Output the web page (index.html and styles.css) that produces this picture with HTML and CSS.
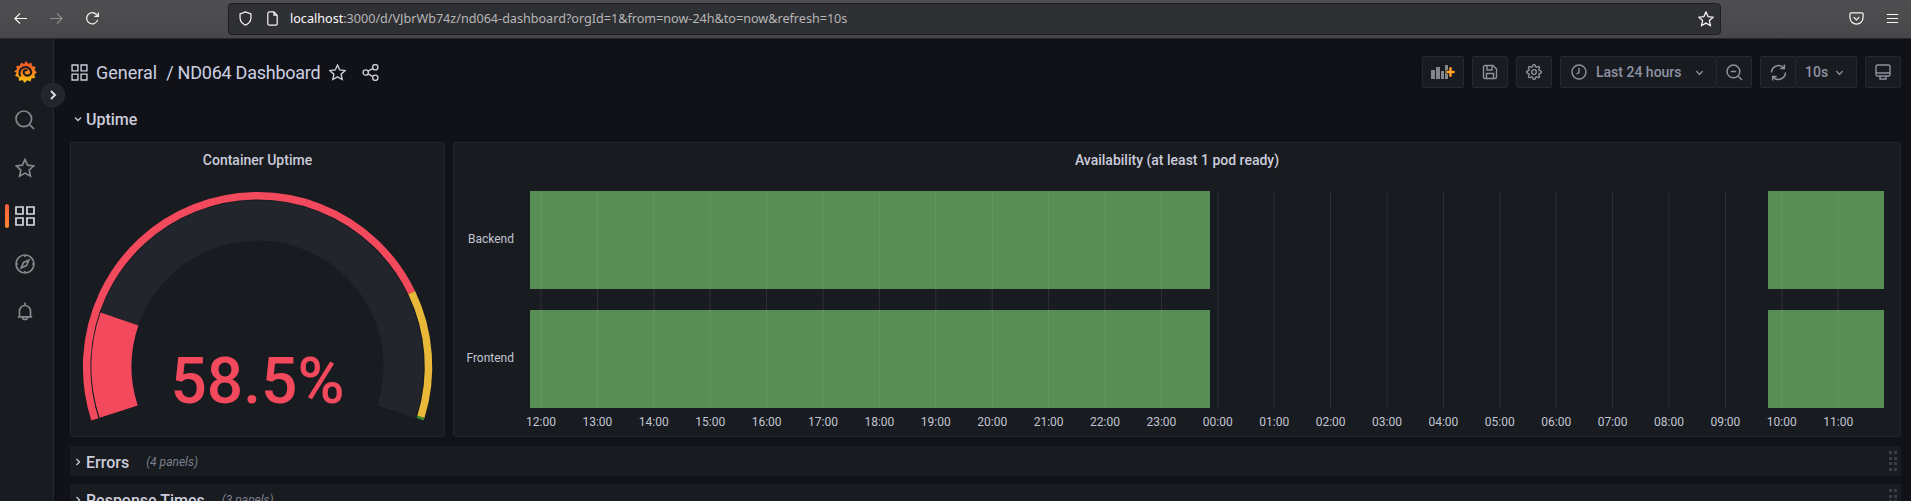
FILE: index.html
```html
<!DOCTYPE html>
<html lang="en">
<head>
<meta charset="utf-8">
<title>ND064 Dashboard - Grafana</title>
<link rel="stylesheet" href="styles.css">
</head>
<body>
<header class="browser">
  <div class="nav-group">
    <svg class="bicon" viewBox="0 0 16 16"><path d="M15 8H2M7.500 2.500 2 8l5.500 5.500"/></svg>
    <svg class="bicon dim" viewBox="0 0 16 16"><path d="M1 8h13M8.500 2.500 14 8l-5.500 5.500"/></svg>
    <svg class="bicon" viewBox="0 0 16 16"><path d="M13.500 9.500A6 6 0 1 1 12.200 3.700L14 5.500M14.300 1.500v4.300H10"/></svg>
  </div>
  <div class="urlbar">
    <svg class="bicon shield" viewBox="0 0 16 16"><path d="M8 1 2.200 3v4.500C2.200 11.500 5.500 14.300 8 15c2.500-.7 5.800-3.500 5.800-7.500V3z"/></svg>
    <svg class="bicon page" viewBox="0 0 16 16"><path d="M3 2.500A1.500 1.500 0 0 1 4.500 1H9.500L13 4.500V13.500A1.500 1.500 0 0 1 11.500 15H4.500A1.500 1.500 0 0 1 3 13.500zM9.500 1V4.500H13"/></svg>
    <span class="url"><span class="host">localhost</span>:3000/d/VJbrWb74z/nd064-dashboard?orgId=1&amp;from=now-24h&amp;to=now&amp;refresh=10s</span>
    <svg class="bicon ustar" viewBox="0 0 16 16"><path d="m8 1 2.100 4.600 5 .6-3.700 3.400 1 5L8 12.100 3.600 14.600l1-5L.9 6.200l5-.6z"/></svg>
  </div>
  <div class="browser-right">
    <svg class="bicon" viewBox="0 0 16 16"><path d="M2.200 2h11.600A1.200 1.200 0 0 1 15 3.200V7A7 7 0 0 1 1 7V3.200A1.200 1.200 0 0 1 2.200 2zM5 6.500 8 9.500l3-3"/></svg>
    <svg class="bicon menu" viewBox="0 0 16 16"><path d="M1 3h14M1 8h14M1 13h14"/></svg>
  </div>
</header>

<div class="app">
  <nav class="sidebar">
    <div class="nav-item">
      <svg class="logo" viewBox="0 0 24 24">
        <defs><linearGradient id="lg" x1="0" y1="0" x2="0" y2="1"><stop offset="0" stop-color="#ee4b2b"/><stop offset=".55" stop-color="#f58a1f"/><stop offset="1" stop-color="#fbca0a"/></linearGradient></defs>
        <path fill="url(#lg)" d="M12.500 .2l2.200 3.300 3.600-1.200.5 3.800 3.800.5-1.100 3.400 2.300 2.400-2.600 2.100.9 3.700-3.700.3-1.300 3.500-3.300-1.500-2.700 2.700-2.400-2.900-3.500 1-.4-3.700-3.600-1.400 1.400-3.300L.1 11.500l3-2.100-.7-3.700 3.600-.2L7.400 2.100l3.100 1.500z"/>
        <path class="logo-spiral" d="M6.800 16.500A6.200 6.200 0 1 1 18 11.800 4 4 0 0 1 10 11.800 2 2 0 0 1 13.600 10.800"/>
      </svg>
    </div>
    <div class="nav-item"><svg class="sicon" viewBox="0 0 20 20"><circle cx="8.800" cy="8.800" r="7.800"/><path d="m14.500 14.500 4.500 4.500"/></svg></div>
    <div class="nav-item"><svg class="sicon" viewBox="0 0 20 20"><path d="m10 1.500 2.600 5.600 6.100.8-4.500 4.200 1.200 6L10 15.100l-5.400 3 1.200-6L1.300 7.900l6.100-.8z"/></svg></div>
    <div class="nav-item active"><svg class="sicon" viewBox="0 0 20 20"><path d="M1 1h7v7H1zM12 1h7v7h-7zM1 12h7v7H1zM12 12h7v7h-7z"/></svg></div>
    <div class="nav-item"><svg class="sicon" viewBox="0 0 20 20"><circle cx="10" cy="10" r="9"/><path d="M13.800 6.200 11.500 11.500 6.200 13.800 8.500 8.500z"/><path d="M10 1v2M10 17v2M1 10h2M17 10h2"/></svg></div>
    <div class="nav-item"><svg class="sicon" viewBox="0 0 20 20"><path d="M10 .5v2.500M4.500 14V9a5.500 5.500 0 0 1 11 0v5M2.800 14.800h14.400M7.500 15a2.500 2.500 0 0 0 5 0"/></svg></div>
    <button class="expand" type="button"><svg viewBox="0 0 12 12"><path d="M4 2l4 4-4 4"/></svg></button>
  </nav>

  <main class="main">
    <div class="topbar">
      <div class="title">
        <svg class="ticon grid-icon" viewBox="0 0 16 16"><path d="M1 1h5.500v5.500H1zM9.500 1H15v5.500H9.500zM1 9.500h5.500V15H1zM9.500 9.500H15V15H9.500z"/></svg>
        <span class="crumb">General</span>
        <span class="crumb crumb-page">/ ND064 Dashboard</span>
        <svg class="ticon star-icon" viewBox="0 0 16 16"><path d="m8 1 2.100 4.600 5 .6-3.700 3.400 1 5L8 12.100 3.600 14.600l1-5L.9 6.200l5-.6z"/></svg>
        <svg class="ticon share-icon" viewBox="0 0 16 16"><circle cx="3.500" cy="8" r="2.500"/><circle cx="12.500" cy="3" r="2.500"/><circle cx="12.500" cy="13" r="2.500"/><path d="m5.700 6.800 4.600-2.600M5.700 9.200l4.600 2.600"/></svg>
      </div>
      <div class="tools">
        <div class="tbtn w-add">
          <svg class="add-icon" viewBox="0 0 24 14"><path class="bars" d="M0 5h4v9H0zM5 2h4v12H5zM10 6h3v8h-3zM14 0h3v14h-3z"/><path class="plus" d="M18 2v3.500h-3v3h3V12h3V8.500h3v-3h-3V2z"/></svg>
        </div>
        <div class="tbtn w-ico"><svg class="tbi" viewBox="0 0 16 16"><path d="M1.500 3A1.500 1.500 0 0 1 3 1.500h8l3.500 3.500v8a1.500 1.500 0 0 1-1.500 1.500H3A1.500 1.500 0 0 1 1.500 13zM5 1.500V6h5V1.500M4.500 14.500V9.500h7v5"/></svg></div>
        <div class="tbtn w-ico"><svg class="tbi gear" viewBox="0 0 24 24"><circle cx="12" cy="12" r="3.500"/><path d="M19.400 15a1.650 1.650 0 0 0 .33 1.820l.06.06a2 2 0 0 1 0 2.830 2 2 0 0 1-2.830 0l-.06-.06a1.650 1.650 0 0 0-1.820-.33 1.650 1.650 0 0 0-1 1.510V21a2 2 0 0 1-2 2 2 2 0 0 1-2-2v-.09A1.650 1.650 0 0 0 9 19.400a1.650 1.650 0 0 0-1.820.33l-.06.06a2 2 0 0 1-2.830 0 2 2 0 0 1 0-2.830l.06-.06a1.650 1.650 0 0 0 .33-1.820 1.650 1.650 0 0 0-1.510-1H3a2 2 0 0 1-2-2 2 2 0 0 1 2-2h.09A1.650 1.650 0 0 0 4.600 9a1.650 1.650 0 0 0-.33-1.820l-.06-.06a2 2 0 0 1 0-2.830 2 2 0 0 1 2.830 0l.06.06a1.650 1.650 0 0 0 1.820.33H9a1.650 1.650 0 0 0 1-1.510V3a2 2 0 0 1 2-2 2 2 0 0 1 2 2v.09a1.650 1.650 0 0 0 1 1.510 1.650 1.650 0 0 0 1.820-.33l.06-.06a2 2 0 0 1 2.830 0 2 2 0 0 1 0 2.830l-.06.06a1.650 1.650 0 0 0-.33 1.820V9a1.650 1.650 0 0 0 1.510 1H21a2 2 0 0 1 2 2 2 2 0 0 1-2 2h-.09a1.650 1.650 0 0 0-1.510 1z"/></svg></div>
        <div class="tgroup">
          <div class="tbtn seg time">
            <svg class="tbi" viewBox="0 0 16 16"><circle cx="8" cy="8" r="7"/><path d="M8 4v4.500L5.500 10"/></svg>
            <span class="tlabel">Last 24 hours</span>
            <svg class="chev" viewBox="0 0 10 10"><path d="M1.500 3.500 5 7l3.500-3.500"/></svg>
          </div>
          <div class="tbtn seg w-ico2"><svg class="tbi big" viewBox="0 0 16 16"><circle cx="7" cy="7" r="6"/><path d="M4.500 7h5M11.500 11.500 15 15"/></svg></div>
        </div>
        <div class="tgroup">
          <div class="tbtn seg w-ico2"><svg class="tbi big" viewBox="0 0 16 16"><path d="M1.500 8a6.500 6.500 0 0 1 11.500-4.200M14.500 8A6.500 6.500 0 0 1 3 12.200M13.500 .5v3.800H9.700M2.500 15.500v-3.800h3.800"/></svg></div>
          <div class="tbtn seg refresh">
            <span class="tlabel">10s</span>
            <svg class="chev" viewBox="0 0 10 10"><path d="M1.500 3.500 5 7l3.500-3.500"/></svg>
          </div>
        </div>
        <div class="tbtn w-ico"><svg class="tbi" viewBox="0 0 16 16"><path d="M2.500 1h11A1.500 1.500 0 0 1 15 2.500v8a1.500 1.500 0 0 1-1.500 1.500h-11A1.500 1.500 0 0 1 1 10.500v-8A1.500 1.500 0 0 1 2.500 1zM1 9h14M5 12v3h6v-3"/></svg></div>
      </div>
    </div>

    <div class="row-open">
      <svg class="rchev" viewBox="0 0 10 10"><path d="M2 3.500 5 6.500l3-3"/></svg>
      <span class="row-name">Uptime</span>
    </div>

    <div class="panels">
      <section class="panel gauge-panel">
        <h2 class="panel-title">Container Uptime</h2>
        <svg class="gauge" viewBox="70 142 375 295">
          <path class="g-track" d="M118.650 411.600 A146 146 0 1 1 396.350 411.600"/>
          <path class="g-val" d="M118.650 411.600 A146 146 0 0 1 119.500 319"/>
          <path class="g-red" d="M94.900 419.300 A171 171 0 0 1 411.700 292.600"/>
          <path class="g-yellow" d="M411.700 292.600 A171 171 0 0 1 420.900 417"/>
          <path class="g-green" d="M420.900 417 A171 171 0 0 1 420.100 419.300"/>
          <text class="g-text" x="257.500" y="403" text-anchor="middle">58.5%</text>
        </svg>
      </section>
      <section class="panel chart-panel">
        <h2 class="panel-title">Availability (at least 1 pod ready)</h2>
        <svg class="chart" viewBox="0 0 1448 295">
          <g class="bars-g">
            <rect x="77" y="49" width="680" height="98"/>
            <rect x="77" y="168" width="680" height="98"/>
            <rect x="1315" y="49" width="116" height="98"/>
            <rect x="1315" y="168" width="116" height="98"/>
          </g>
          <g class="grid-g">
            <path d="M88 49V266M144.400 49V266M200.800 49V266M257.200 49V266M313.600 49V266M370 49V266M426.400 49V266M482.800 49V266M539.200 49V266M595.600 49V266M652 49V266M708.400 49V266M764.800 49V266M821.200 49V266M877.600 49V266M934 49V266M990.400 49V266M1046.800 49V266M1103.200 49V266M1159.600 49V266M1216 49V266M1272.400 49V266M1328.800 49V266M1385.200 49V266"/>
          </g>
          <g class="ylabels">
            <text x="61" y="101" text-anchor="end">Backend</text>
            <text x="61" y="220" text-anchor="end">Frontend</text>
          </g>
          <g class="xlabels" text-anchor="middle">
            <text x="88" y="284">12:00</text><text x="144.400" y="284">13:00</text><text x="200.800" y="284">14:00</text><text x="257.200" y="284">15:00</text><text x="313.600" y="284">16:00</text><text x="370" y="284">17:00</text><text x="426.400" y="284">18:00</text><text x="482.800" y="284">19:00</text><text x="539.200" y="284">20:00</text><text x="595.600" y="284">21:00</text><text x="652" y="284">22:00</text><text x="708.400" y="284">23:00</text><text x="764.800" y="284">00:00</text><text x="821.200" y="284">01:00</text><text x="877.600" y="284">02:00</text><text x="934" y="284">03:00</text><text x="990.400" y="284">04:00</text><text x="1046.800" y="284">05:00</text><text x="1103.200" y="284">06:00</text><text x="1159.600" y="284">07:00</text><text x="1216" y="284">08:00</text><text x="1272.400" y="284">09:00</text><text x="1328.800" y="284">10:00</text><text x="1385.200" y="284">11:00</text>
          </g>
        </svg>
      </section>
    </div>

    <div class="row-closed">
      <svg class="rchev" viewBox="0 0 10 10"><path d="M3.500 2 6.500 5l-3 3"/></svg>
      <span class="row-name">Errors</span>
      <span class="row-count">(4 panels)</span>
      <span class="drag"><i></i><i></i><i></i><i></i><i></i><i></i><i></i><i></i></span>
    </div>
    <div class="row-closed">
      <svg class="rchev" viewBox="0 0 10 10"><path d="M3.500 2 6.500 5l-3 3"/></svg>
      <span class="row-name">Response Times</span>
      <span class="row-count">(3 panels)</span>
      <span class="drag"><i></i><i></i><i></i><i></i><i></i><i></i><i></i><i></i></span>
    </div>
  </main>
</div>
</body>
</html>
```
FILE: styles.css
```css
* { box-sizing: border-box; }
html, body { margin: 0; height: 100%; overflow: hidden; background: #111217; }
body { font-family: Roboto, sans-serif; color: #ccccdc; display: flex; flex-direction: column; }
svg { display: block; }

.browser { height: 39px; flex: none; display: flex; align-items: center; background: linear-gradient(#4f4f51, #47474a); border-bottom: 1px solid #2a2a2e; padding-bottom: 1px; }
.bicon { width: 15px; height: 15px; fill: none; stroke: #f4f4f5; stroke-width: 1.300; flex: none; }
.bicon.dim { stroke: #8e8e90; }
.nav-group { width: 228px; padding-left: 13px; display: flex; gap: 21px; flex: none; }
.urlbar { width: 1493px; height: 32px; flex: none; display: flex; align-items: center; background: #2f3033; border: 1px solid #1e1e20; border-radius: 4px; padding-left: 9px; }
.shield { margin-right: 12px; }
.page { margin-right: 10px; }
.url { font: 12.600px "Noto Sans", sans-serif; color: #b6b6b8; flex: 1; white-space: nowrap; }
.host { color: #fbfbfe; }
.ustar { width: 16px; height: 16px; margin-right: 6px; }
.browser-right { flex: 1; display: flex; justify-content: flex-end; gap: 22px; padding-right: 12px; }
.menu { width: 13px; }

.app { flex: 1; display: flex; min-height: 0; }
.sidebar { width: 54px; flex: none; background: #181b1f; border-right: 1px solid #24272c; padding-top: 9px; display: flex; flex-direction: column; position: relative; }
.nav-item { height: 48px; flex: none; display: flex; align-items: center; justify-content: center; position: relative; padding-right: 3px; }
.nav-item.active::before { content: ""; position: absolute; left: 5px; top: 12px; width: 4px; height: 24px; border-radius: 2px; background: linear-gradient(#f55f3e, #ff8833); }
.logo { width: 23px; height: 24px; }
.logo-spiral { fill: none; stroke: #1c1a1c; stroke-width: 2.200; }
.sicon { width: 20px; height: 20px; fill: none; stroke: #85868c; stroke-width: 1.700; }
.active .sicon { stroke: #d8d9e4; }
.expand { position: absolute; left: 41px; top: 44px; width: 24px; height: 24px; border-radius: 50%; border: 1px solid #2b2e33; background: #22252b; padding: 5px; z-index: 2; }
.expand svg { width: 12px; height: 12px; fill: none; stroke: #d8d9e4; stroke-width: 2; }

.main { flex: 1; min-width: 0; padding: 17px 10px 0 16px; display: flex; flex-direction: column; overflow: hidden; }
.topbar { height: 32px; flex: none; display: flex; align-items: center; justify-content: space-between; }
.title { display: flex; align-items: center; }
.ticon { fill: none; stroke: #ccccdc; stroke-width: 1.300; width: 17px; height: 17px; flex: none; }
.grid-icon { margin-left: 1px; margin-right: 8px; }
.crumb { font-size: 18px; color: #ccd0e2; white-space: nowrap; margin-right: 9px; }
.crumb-page { letter-spacing: -0.25px; }
.star-icon { margin-left: 0; margin-right: 16px; }
.tools { display: flex; gap: 8px; }
.tgroup { display: flex; }
.tbtn { height: 32px; background: #181b1f; border: 1px solid #25282d; border-radius: 2px; display: flex; align-items: center; justify-content: center; color: #9fa3b2; flex: none; }
.w-add { width: 42px; }
.w-ico { width: 36px; }
.w-ico2 { width: 36px; }
.seg + .seg { margin-left: -1px; }
.time { width: 157px; justify-content: flex-start; padding-left: 10px; }
.refresh { width: 62px; justify-content: flex-start; padding-left: 9px; }
.tlabel { font-size: 14px; font-weight: 500; color: #8e92a3; margin-left: 9px; white-space: nowrap; }
.refresh .tlabel { margin-left: 0; }
.time .chev { margin-left: 13px; }
.refresh .chev { margin-left: 7px; }
.chev { width: 9px; height: 9px; fill: none; stroke: #9fa3b2; stroke-width: 1.300; }
.tbi { width: 16px; height: 16px; fill: none; stroke: #8f929e; stroke-width: 1.400; flex: none; }
.tbi.big { width: 17px; height: 17px; }
.tbi.gear { stroke-width: 2.100; }
.add-icon { width: 24px; height: 14px; }
.add-icon .bars { fill: #85868c; }
.add-icon .plus { fill: #ffa32a; stroke: #181b1f; stroke-width: .6; }

.row-open { height: 30px; flex: none; margin: 16px 0 8px; display: flex; align-items: center; gap: 3px; padding-left: 3px; }
.rchev { width: 10px; height: 10px; fill: none; stroke: #ccccdc; stroke-width: 1.300; flex: none; }
.row-name { font-size: 16px; font-weight: 500; color: #ccccdc; white-space: nowrap; }
.panels { flex: none; height: 295px; display: flex; gap: 8px; margin-bottom: 9px; }
.panel { background: #181b1f; border: 1px solid #24272c; border-radius: 3px; position: relative; flex: none; overflow: hidden; }
.panel-title { margin: 0; position: absolute; left: 0; right: 0; top: 9px; text-align: center; font-size: 14px; font-weight: 500; line-height: 16px; color: #ccccdc; }
.gauge-panel { width: 375px; }
.chart-panel { width: 1448px; }
.gauge { position: absolute; left: -1px; top: -1px; width: 375px; height: 295px; }
.chart { position: absolute; left: -1px; top: -1px; width: 1448px; height: 295px; }
.g-track, .g-val { fill: none; stroke-width: 40; }
.g-track { stroke: #22252b; }
.g-val { stroke: #f2495c; }
.g-red, .g-yellow, .g-green { fill: none; stroke-width: 7.500; }
.g-red { stroke: #f2495c; }
.g-yellow { stroke: #eab839; }
.g-green { stroke: #37872d; }
.g-text { font: 500 64px Roboto, sans-serif; fill: #f2495c; }
.bars-g rect { fill: #588e53; }
.grid-g path { stroke: rgba(204, 204, 220, 0.12); stroke-width: 1; fill: none; }
.ylabels text, .xlabels text { font: 12px Roboto, sans-serif; fill: #c2c5d3; }

.row-closed { height: 30px; flex: none; background: #181b1f; margin-bottom: 8px; display: flex; align-items: center; padding: 2px 0 0 3px; gap: 3px; position: relative; }
.row-count { font-size: 12px; font-style: italic; color: #7b7f8e; margin-left: 14px; }
.drag { position: absolute; right: 4px; top: 5px; display: grid; grid-template-columns: 3px 3px; gap: 2.500px 2px; }
.drag i { width: 3px; height: 3px; background: #3b3e44; display: block; }
```
